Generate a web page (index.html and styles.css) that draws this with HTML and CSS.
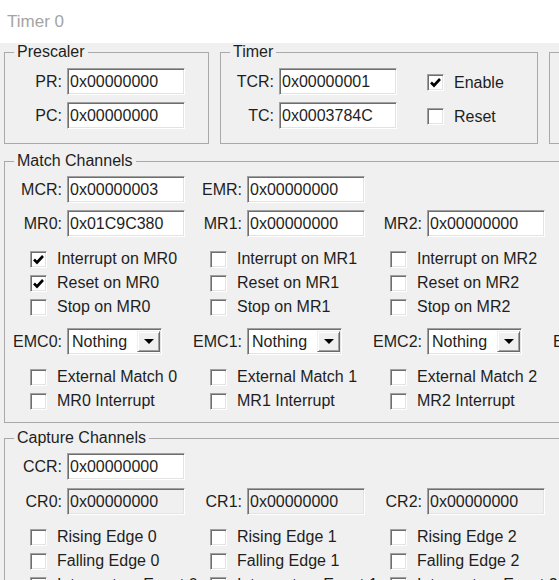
FILE: index.html
```html
<!DOCTYPE html>
<html lang="en">
<head>
<meta charset="utf-8">
<title>Timer 0</title>
<link rel="stylesheet" href="styles.css">
</head>
<body>
<div class="header">Timer 0</div>
<div class="panel">
  <div class="top-row">
    <fieldset class="group prescaler">
      <legend>Prescaler</legend>
      <div class="rows">
        <div class="field"><label>PR:</label><input class="edit" type="text" value="0x00000000"></div>
        <div class="field"><label>PC:</label><input class="edit" type="text" value="0x00000000"></div>
      </div>
    </fieldset>
    <fieldset class="group timer">
      <legend>Timer</legend>
      <div class="rows">
        <div class="field"><label>TCR:</label><input class="edit" type="text" value="0x00000001">
          <span class="chk"><span class="box checked"><svg viewBox="0 0 13 13" width="13" height="13"><path d="M2 6.5 L5 9.5 L11 3" fill="none" stroke="#000" stroke-width="2.6"/></svg></span>Enable</span></div>
        <div class="field"><label>TC:</label><input class="edit" type="text" value="0x0003784C">
          <span class="chk"><span class="box"></span>Reset</span></div>
      </div>
    </fieldset>
    <div class="group more"></div>
  </div>

  <fieldset class="group match">
    <legend>Match Channels</legend>
    <div class="grid fields">
      <div class="field"><label>MCR:</label><input class="edit" type="text" value="0x00000003"></div>
      <div class="field"><label>EMR:</label><input class="edit" type="text" value="0x00000000"></div>
      <div></div>
      <div class="field"><label>MR0:</label><input class="edit" type="text" value="0x01C9C380"></div>
      <div class="field"><label>MR1:</label><input class="edit" type="text" value="0x00000000"></div>
      <div class="field"><label>MR2:</label><input class="edit" type="text" value="0x00000000"></div>
    </div>
    <div class="grid checks">
      <span class="chk"><span class="box checked"><svg viewBox="0 0 13 13" width="13" height="13"><path d="M2 6.5 L5 9.5 L11 3" fill="none" stroke="#000" stroke-width="2.6"/></svg></span>Interrupt on MR0</span>
      <span class="chk"><span class="box"></span>Interrupt on MR1</span>
      <span class="chk"><span class="box"></span>Interrupt on MR2</span>
      <span class="chk"><span class="box checked"><svg viewBox="0 0 13 13" width="13" height="13"><path d="M2 6.5 L5 9.5 L11 3" fill="none" stroke="#000" stroke-width="2.6"/></svg></span>Reset on MR0</span>
      <span class="chk"><span class="box"></span>Reset on MR1</span>
      <span class="chk"><span class="box"></span>Reset on MR2</span>
      <span class="chk"><span class="box"></span>Stop on MR0</span>
      <span class="chk"><span class="box"></span>Stop on MR1</span>
      <span class="chk"><span class="box"></span>Stop on MR2</span>
    </div>
    <div class="grid emc">
      <div class="field"><label>EMC0:</label><span class="select"><span class="sel-text">Nothing</span><span class="sel-btn"><span class="arrow"></span></span></span></div>
      <div class="field"><label>EMC1:</label><span class="select"><span class="sel-text">Nothing</span><span class="sel-btn"><span class="arrow"></span></span></span></div>
      <div class="field"><label>EMC2:</label><span class="select"><span class="sel-text">Nothing</span><span class="sel-btn"><span class="arrow"></span></span></span></div>
      <div class="field"><label>EMC3:</label><span class="select"><span class="sel-text">Nothing</span><span class="sel-btn"><span class="arrow"></span></span></span></div>
    </div>
    <div class="grid checks ext">
      <span class="chk"><span class="box"></span>External Match 0</span>
      <span class="chk"><span class="box"></span>External Match 1</span>
      <span class="chk"><span class="box"></span>External Match 2</span>
      <span class="chk"><span class="box"></span>MR0 Interrupt</span>
      <span class="chk"><span class="box"></span>MR1 Interrupt</span>
      <span class="chk"><span class="box"></span>MR2 Interrupt</span>
    </div>
  </fieldset>

  <fieldset class="group capture">
    <legend>Capture Channels</legend>
    <div class="grid fields">
      <div class="field"><label>CCR:</label><input class="edit" type="text" value="0x00000000"></div>
      <div></div><div></div>
      <div class="field"><label>CR0:</label><input class="edit ro" type="text" value="0x00000000" readonly></div>
      <div class="field"><label>CR1:</label><input class="edit ro" type="text" value="0x00000000" readonly></div>
      <div class="field"><label>CR2:</label><input class="edit ro" type="text" value="0x00000000" readonly></div>
    </div>
    <div class="grid checks">
      <span class="chk"><span class="box"></span>Rising Edge 0</span>
      <span class="chk"><span class="box"></span>Rising Edge 1</span>
      <span class="chk"><span class="box"></span>Rising Edge 2</span>
      <span class="chk"><span class="box"></span>Falling Edge 0</span>
      <span class="chk"><span class="box"></span>Falling Edge 1</span>
      <span class="chk"><span class="box"></span>Falling Edge 2</span>
      <span class="chk"><span class="box"></span>Interrupt on Event 0</span>
      <span class="chk"><span class="box"></span>Interrupt on Event 1</span>
      <span class="chk"><span class="box"></span>Interrupt on Event 2</span>
    </div>
  </fieldset>
</div>
</body>
</html>
```

FILE: styles.css
```css
* { box-sizing: border-box; }
html, body { margin: 0; padding: 0; }
body {
  width: 559px;
  height: 580px;
  overflow: hidden;
  background: #f0f0f0;
  font-family: "Liberation Sans", Arial, sans-serif;
  font-size: 16px;
  color: #1e1e1e;
}
.header {
  height: 43px;
  line-height: 43px;
  background: #ffffff;
  color: #a4a4a4;
  padding-left: 7px;
  font-size: 17px;
}
.panel {
  padding-left: 4px;
  width: 780px;
}
.top-row {
  display: flex;
  gap: 11px;
  align-items: flex-start;
}
.group {
  margin: 0;
  padding: 0;
  border: 1px solid #a9a9a9;
  min-width: 0;
}
.group legend {
  margin-left: 9px;
  padding: 0 3px;
  height: 18px;
  line-height: 18px;
  color: #1e1e1e;
}
.prescaler { width: 205px; padding: 7px 0 14px; }
.timer { width: 318px; padding: 7px 0 14px; }
.more { width: 160px; height: 92px; margin-top: 9px; }
.rows { display: flex; flex-direction: column; gap: 7px; }
.field { display: flex; align-items: center; gap: 5px; white-space: nowrap; }
.field label { width: 57px; text-align: right; }
.timer .field label { width: 53px; }
.edit {
  width: 118px;
  height: 27px;
  margin: 0;
  padding: 0 2px;
  font: inherit;
  color: #1e1e1e;
  background: #ffffff;
  border: 1px solid;
  border-color: #a0a0a0 #ffffff #ffffff #a0a0a0;
  box-shadow: inset 1px 1px 0 #6e6e6e, inset -1px -1px 0 #e3e3e3;
  outline: none;
}
.edit.ro { background: #f0f0f0; }
.chk {
  display: flex;
  align-items: center;
  gap: 10px;
  padding-left: 25px;
  white-space: nowrap;
}
.timer .chk { padding-left: 0; margin-left: 25px; margin-top: 2px; }
.box {
  width: 17px;
  height: 17px;
  flex: none;
  display: flex;
  align-items: center;
  justify-content: center;
  background: #ffffff;
  border: 1px solid;
  border-color: #a0a0a0 #ffffff #ffffff #a0a0a0;
  box-shadow: inset 1px 1px 0 #6e6e6e, inset -1px -1px 0 #e3e3e3;
}
.match { width: 740px; margin-top: 8px; padding: 6px 0 9px; }
.capture { width: 740px; margin-top: 6px; padding: 6px 0 20px; }
.grid { display: grid; grid-template-columns: repeat(3, 180px); }
.emc { grid-template-columns: repeat(4, 180px); margin-top: 9px; }
.fields { row-gap: 7px; }
.capture .fields { row-gap: 8px; }
.checks { grid-auto-rows: 24px; margin-top: 10px; }
.ext { margin-top: 10px; }
.select {
  width: 95px;
  height: 27px;
  display: flex;
  align-items: center;
  background: #ffffff;
  border: 1px solid;
  border-color: #a0a0a0 #ffffff #ffffff #a0a0a0;
  box-shadow: inset 1px 1px 0 #6e6e6e, inset -1px -1px 0 #e3e3e3;
}
.sel-text { flex: 1; padding-left: 4px; }
.sel-btn {
  width: 23px;
  height: 21px;
  margin-right: 1px;
  display: flex;
  align-items: center;
  justify-content: center;
  background: #f0f0f0;
  border: 1px solid;
  border-color: #f0f0f0 #696969 #696969 #f0f0f0;
  box-shadow: inset 1px 1px 0 #ffffff, inset -1px -1px 0 #a0a0a0;
}
.arrow {
  width: 0;
  height: 0;
  border-left: 5px solid transparent;
  border-right: 5px solid transparent;
  border-top: 5px solid #000000;
}
```
